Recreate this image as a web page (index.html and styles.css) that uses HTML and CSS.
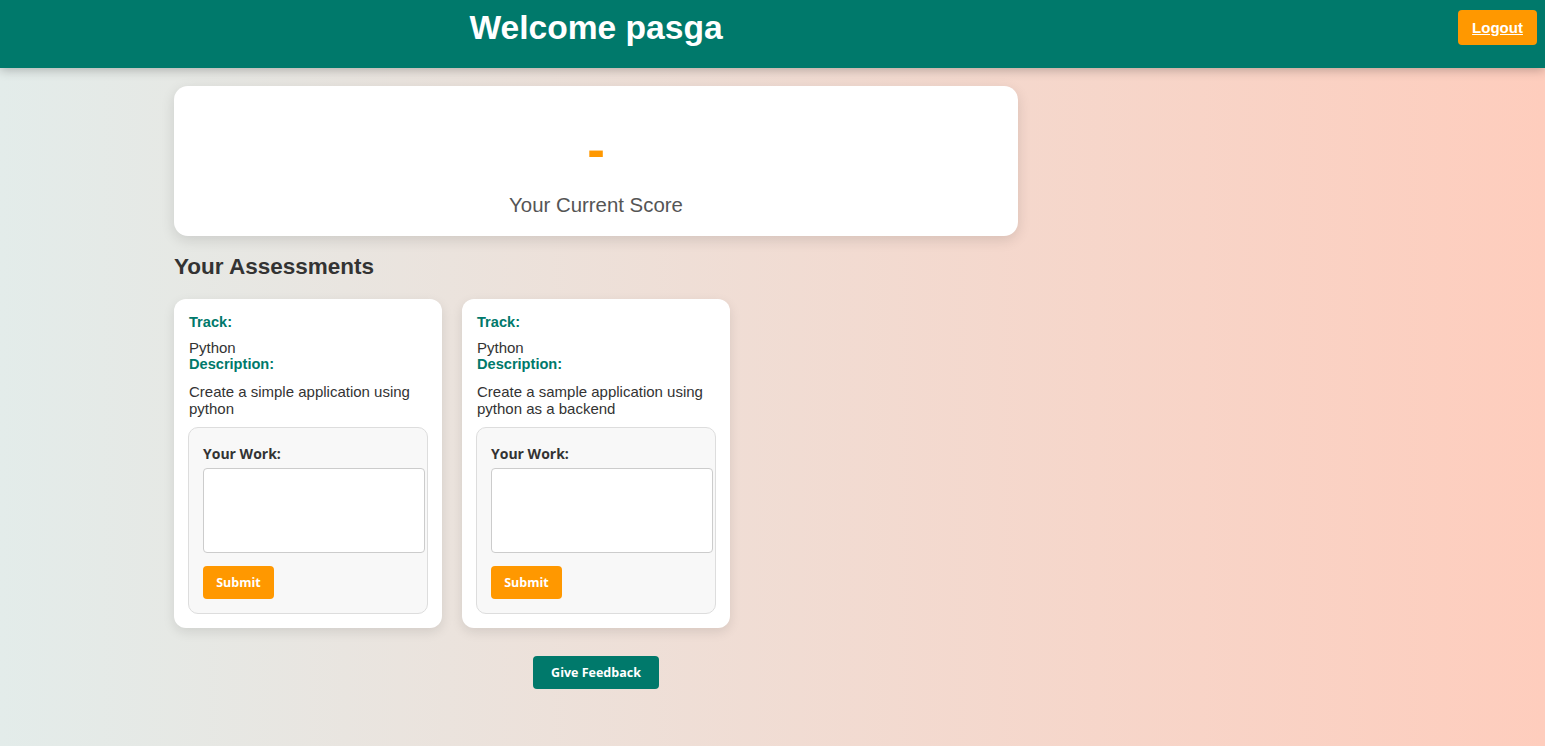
FILE: index.html
```html
<!DOCTYPE html>
<html lang="en">
<head>
<meta charset="utf-8">
<title>Dashboard</title>
<link rel="stylesheet" href="styles.css">
</head>
<body>
<header class="topbar">
  <div class="topbar-inner">
    <h1 class="welcome">Welcome pasga</h1>
  </div>
  <button class="logout">Logout</button>
</header>
<main class="container">
  <section class="score-card">
    <div class="score-value">-</div>
    <div class="score-label">Your Current Score</div>
  </section>
  <h2 class="section-title">Your Assessments</h2>
  <div class="assessments">
    <div class="card">
      <strong class="field-label first">Track:</strong>
      <div class="field-value">Python</div>
      <strong class="field-label">Description:</strong>
      <div class="field-value desc">Create a simple application using python</div>
      <div class="work-box">
        <label class="work-label">Your Work:</label>
        <textarea class="work-input"></textarea>
        <button class="btn btn-orange">Submit</button>
      </div>
    </div>
    <div class="card">
      <strong class="field-label first">Track:</strong>
      <div class="field-value">Python</div>
      <strong class="field-label">Description:</strong>
      <div class="field-value desc">Create a sample application using python as a backend</div>
      <div class="work-box">
        <label class="work-label">Your Work:</label>
        <textarea class="work-input"></textarea>
        <button class="btn btn-orange">Submit</button>
      </div>
    </div>
  </div>
  <div class="feedback-row">
    <button class="btn btn-teal">Give Feedback</button>
  </div>
</main>
</body>
</html>
```

FILE: styles.css
```css
html, body {
  margin: 0;
  padding: 0;
}
body {
  min-height: 746px;
  font-family: "Liberation Sans", Arial, sans-serif;
  background: linear-gradient(to right, #e3ecea, #fecdbd);
  color: #333;
}
.topbar {
  position: relative;
  background: #00796b;
  height: 68px;
  box-shadow: 0 2px 10px rgba(0, 0, 0, 0.25);
}
.topbar-inner {
  width: 844px;
  margin-left: 174px;
  text-align: center;
}
.welcome {
  margin: 0;
  padding-top: 8px;
  font-size: 33.6px;
  line-height: 40px;
  font-weight: bold;
  color: #fff;
}
.logout {
  position: absolute;
  top: 10px;
  right: 8px;
  width: 79px;
  height: 35px;
  background: #ff9800;
  color: #fff;
  border: none;
  border-radius: 4px;
  font-family: "Liberation Sans", Arial, sans-serif;
  font-weight: bold;
  font-size: 15px;
  text-decoration: underline;
  padding: 0;
}
.container {
  width: 844px;
  margin-left: 174px;
  padding-top: 18px;
}
.score-card {
  background: #fff;
  border-radius: 14px;
  box-shadow: 0 4px 14px rgba(0, 0, 0, 0.12);
  height: 150px;
  box-sizing: border-box;
  padding-top: 20px;
  text-align: center;
}
.score-value {
  font-size: 53px;
  font-weight: bold;
  color: #ff9800;
  line-height: 55px;
  margin-top: 16px;
}
.score-label {
  font-size: 20.4px;
  color: #555;
  line-height: 23px;
  margin-top: 17px;
}
.section-title {
  margin: 18px 0 20px;
  font-size: 22.5px;
  line-height: 25px;
  font-weight: bold;
  color: #333;
}
.assessments {
  display: grid;
  grid-template-columns: repeat(3, 1fr);
  gap: 20px;
  align-items: start;
}
.card {
  background: #fff;
  border-radius: 12px;
  box-shadow: 0 4px 12px rgba(0, 0, 0, 0.1);
  padding: 15px 14px 14px 14px;
}
.field-label {
  display: block;
  color: #00796b;
  font-size: 14.6px;
  line-height: 17px;
  font-weight: bold;
  padding-left: 1px;
}
.field-label.first {
  margin-bottom: 8px;
}
.field-value {
  font-size: 15px;
  line-height: 17px;
  color: #333;
  padding-left: 1px;
}
.field-value.desc {
  margin-top: 10px;
}
.work-box {
  margin-top: 10px;
  background: #f8f8f8;
  border: 1px solid #ddd;
  border-radius: 10px;
  padding: 16px 14px 14px 14px;
}
.work-label {
  display: block;
  font-family: "Open Sans", "Noto Sans", sans-serif;
  font-weight: bold;
  font-size: 14px;
  line-height: 20px;
  color: #333;
  margin-bottom: 4px;
}
.work-input {
  display: block;
  width: 100%;
  height: 73px;
  padding: 5px;
  border: 1px solid #ccc;
  border-radius: 4px;
  background: #fff;
  resize: none;
  margin: 0;
  font-family: "Liberation Sans", Arial, sans-serif;
}
.btn {
  border: none;
  border-radius: 4px;
  color: #fff;
  font-family: "Open Sans", "Noto Sans", sans-serif;
  font-weight: bold;
  font-size: 12.5px;
  height: 33px;
  padding: 0;
}
.btn-orange {
  background: #ff9800;
  width: 71px;
  margin-top: 13px;
}
.btn-teal {
  background: #00796b;
  width: 126px;
}
.feedback-row {
  display: flex;
  justify-content: center;
  margin-top: 28px;
}
```
